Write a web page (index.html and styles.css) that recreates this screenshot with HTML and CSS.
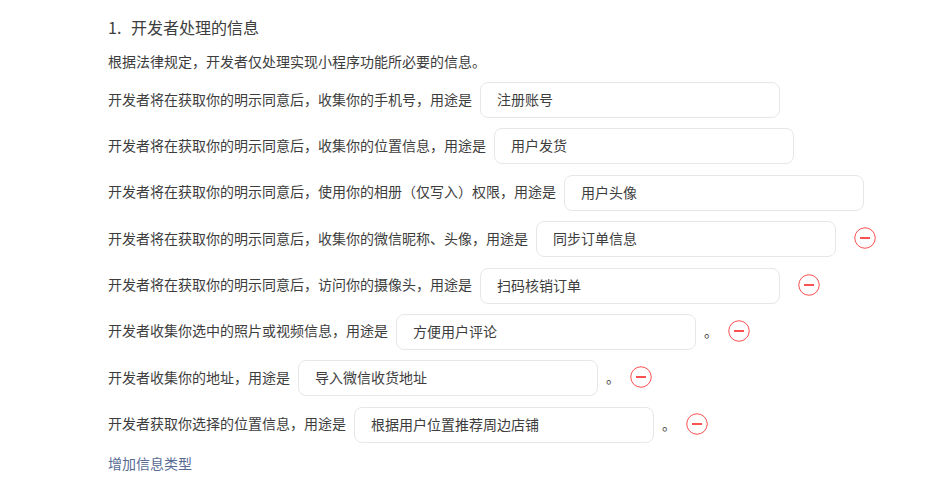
FILE: index.html
```html
<!DOCTYPE html>
<html lang="zh-CN">
<head>
<meta charset="utf-8">
<title>开发者处理的信息</title>
<link rel="stylesheet" href="styles.css">
</head>
<body>
<main class="page">
  <h2 class="title"><span class="num">1.</span>开发者处理的信息</h2>
  <p class="intro">根据法律规定，开发者仅处理实现小程序功能所必要的信息。</p>
  <div class="rows">
    <div class="row"><span class="label">开发者将在获取你的明示同意后，收集你的手机号，用途是</span><div class="field">注册账号</div></div>
    <div class="row"><span class="label">开发者将在获取你的明示同意后，收集你的位置信息，用途是</span><div class="field">用户发货</div></div>
    <div class="row"><span class="label">开发者将在获取你的明示同意后，使用你的相册（仅写入）权限，用途是</span><div class="field">用户头像</div></div>
    <div class="row"><span class="label">开发者将在获取你的明示同意后，收集你的微信昵称、头像，用途是</span><div class="field">同步订单信息</div>
      <svg class="remove wide" viewBox="0 0 22 22"><circle cx="11" cy="11" r="10.25"/><path d="M6 11h10"/></svg></div>
    <div class="row"><span class="label">开发者将在获取你的明示同意后，访问你的摄像头，用途是</span><div class="field">扫码核销订单</div>
      <svg class="remove wide" viewBox="0 0 22 22"><circle cx="11" cy="11" r="10.25"/><path d="M6 11h10"/></svg></div>
    <div class="row"><span class="label">开发者收集你选中的照片或视频信息，用途是</span><div class="field">方便用户评论</div><span class="stop">。</span>
      <svg class="remove" viewBox="0 0 22 22"><circle cx="11" cy="11" r="10.25"/><path d="M6 11h10"/></svg></div>
    <div class="row"><span class="label">开发者收集你的地址，用途是</span><div class="field">导入微信收货地址</div><span class="stop">。</span>
      <svg class="remove" viewBox="0 0 22 22"><circle cx="11" cy="11" r="10.25"/><path d="M6 11h10"/></svg></div>
    <div class="row"><span class="label">开发者获取你选择的位置信息，用途是</span><div class="field">根据用户位置推荐周边店铺</div><span class="stop">。</span>
      <svg class="remove" viewBox="0 0 22 22"><circle cx="11" cy="11" r="10.25"/><path d="M6 11h10"/></svg></div>
  </div>
  <a class="add" href="#">增加信息类型</a>
</main>
</body>
</html>
```
FILE: styles.css
```css
html, body {
  margin: 0;
  padding: 0;
  background: #fff;
}
body {
  font-family: "Noto Sans CJK SC", "Noto Sans", sans-serif;
  font-size: 14px;
  color: #3d3d3d;
}
.page {
  padding: 15px 0 0 108px;
}
.title {
  margin: 0;
  font-size: 16px;
  font-weight: 400;
  line-height: 24px;
}
.num {
  display: inline-block;
  width: 23px;
}
.intro {
  margin: 10px 0 0;
  line-height: 24px;
}
.rows {
  display: flex;
  flex-direction: column;
  gap: 10.4px;
  margin-top: 9px;
}
.row {
  display: flex;
  align-items: center;
  height: 36px;
  line-height: 24px;
}
.label {
  padding-bottom: 3px;
}
.field {
  box-sizing: border-box;
  width: 300px;
  height: 36px;
  margin-left: 8px;
  padding: 0 16px;
  border: 1px solid #e7e7e7;
  border-radius: 8px;
  line-height: 32px;
}
.stop {
  margin-left: 8px;
  line-height: 24px;
  padding-bottom: 2px;
}
.remove {
  width: 22px;
  height: 22px;
  margin-left: 10px;
  margin-bottom: 2px;
  fill: none;
  stroke: #fa5151;
  stroke-width: 1;
}
.remove path {
  stroke-width: 2;
}
.remove.wide {
  margin-left: 18px;
}
.add {
  display: block;
  margin-top: 8px;
  line-height: 24px;
  color: #576b95;
  text-decoration: none;
}
```
